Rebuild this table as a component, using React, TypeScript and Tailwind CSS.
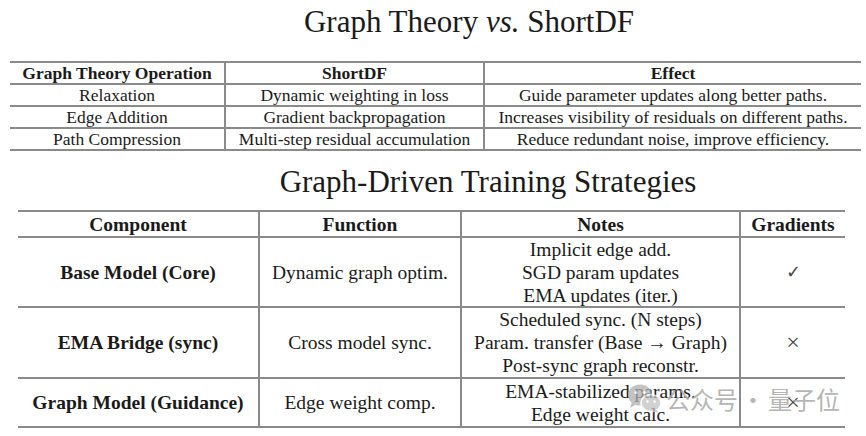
import React from 'react'

const serif = { fontFamily: '"Liberation Serif", "Times New Roman", serif' }

const opsRows = [
  ['Relaxation', 'Dynamic weighting in loss', 'Guide parameter updates along better paths.'],
  ['Edge Addition', 'Gradient backpropagation', 'Increases visibility of residuals on different paths.'],
  ['Path Compression', 'Multi-step residual accumulation', 'Reduce redundant noise, improve efficiency.'],
]

interface StrategyRow {
  component: string
  fn: string
  notes: string[]
  grad: string
  height: string
}

const strategyRows: StrategyRow[] = [
  {
    component: 'Base Model (Core)',
    fn: 'Dynamic graph optim.',
    notes: ['Implicit edge add.', 'SGD param updates', 'EMA updates (iter.)'],
    grad: '✓',
    height: 'h-[70px]',
  },
  {
    component: 'EMA Bridge (sync)',
    fn: 'Cross model sync.',
    notes: ['Scheduled sync. (N steps)', 'Param. transfer (Base → Graph)', 'Post-sync graph reconstr.'],
    grad: '×',
    height: 'h-[71px]',
  },
  {
    component: 'Graph Model (Guidance)',
    fn: 'Edge weight comp.',
    notes: ['EMA-stabilized params.', 'Edge weight calc.'],
    grad: '×',
    height: 'h-[49px]',
  },
]

// watermark logo (two chat bubbles)
function WeChatMark() {
  return (
    <svg width="36" height="32" viewBox="0 0 36 32" className="opacity-75">
      <ellipse cx="13" cy="12" rx="12" ry="10.5" fill="#b0b0b0" />
      <path d="M5 19 L3 25 L10 21 Z" fill="#b0b0b0" />
      <circle cx="9" cy="9.5" r="1.6" fill="#fff" />
      <circle cx="17" cy="9.5" r="1.6" fill="#fff" />
      <ellipse cx="24" cy="20" rx="10" ry="8.5" fill="#c2c2c2" stroke="#fff" strokeWidth="1.5" />
      <path d="M29 26 L32 30 L25 28 Z" fill="#c2c2c2" />
      <circle cx="20.5" cy="18.5" r="1.3" fill="#fff" />
      <circle cx="27.5" cy="18.5" r="1.3" fill="#fff" />
    </svg>
  )
}

export default function App() {
  return (
    <div className="relative w-[866px] h-[436px] overflow-hidden bg-white text-[#1a1a1a]" style={serif}>
      <div className="pt-[2px] pl-[72px] h-[42px] text-center text-[31px] leading-[40px]">
        Graph Theory <i>vs.</i> ShortDF
      </div>

      <div className="mt-[19px] ml-[10px] w-[851px] border-t-2 border-[#8a8a8a] text-[17.5px] leading-[20px]">
        <div className="grid grid-cols-[214px_259px_378px] h-[22px] border-b-2 border-[#8a8a8a] font-bold">
          <div className="flex items-center justify-center">Graph Theory Operation</div>
          <div className="flex items-center justify-center border-l-2 border-[#8a8a8a]">ShortDF</div>
          <div className="flex items-center justify-center border-l-2 border-[#8a8a8a]">Effect</div>
        </div>
        {opsRows.map((r) => (
          <div key={r[0]} className="grid grid-cols-[214px_259px_378px] h-[22px] border-b-2 border-[#8a8a8a]">
            <div className="flex items-center justify-center">{r[0]}</div>
            <div className="flex items-center justify-center border-l-2 border-[#8a8a8a]">{r[1]}</div>
            <div className="flex items-center justify-center border-l-2 border-[#8a8a8a]">{r[2]}</div>
          </div>
        ))}
      </div>

      <div className="mt-[11px] pl-[110px] h-[40px] text-center text-[31px] leading-[40px]">
        Graph-Driven Training Strategies
      </div>

      <div className="mt-[8px] ml-[18px] w-[827px] border-t-2 border-[#8a8a8a] text-[19.5px] leading-[23px]">
        <div className="grid grid-cols-[240px_202px_279px_106px] h-[26px] border-b-2 border-[#8a8a8a] font-bold">
          <div className="flex items-center justify-center">Component</div>
          <div className="flex items-center justify-center border-l-2 border-[#8a8a8a]">Function</div>
          <div className="flex items-center justify-center border-l-2 border-[#8a8a8a]">Notes</div>
          <div className="flex items-center justify-center border-l-2 border-[#8a8a8a]">Gradients</div>
        </div>
        {strategyRows.map((r) => (
          <div
            key={r.component}
            className={`grid grid-cols-[240px_202px_279px_106px] border-b-2 border-[#8a8a8a] ${r.height}`}
          >
            <div className="flex items-center justify-center font-bold">{r.component}</div>
            <div className="flex items-center justify-center border-l-2 border-[#8a8a8a]">{r.fn}</div>
            <div className="flex flex-col items-center justify-center border-l-2 border-[#8a8a8a]">
              {r.notes.map((n) => (
                <span key={n}>{n}</span>
              ))}
            </div>
            <div
              className={`flex items-center justify-center border-l-2 border-[#8a8a8a] text-[#444] ${
                r.grad === '✓' ? 'text-[18px]' : 'text-[24px]'
              }`}
            >
              {r.grad}
            </div>
          </div>
        ))}
      </div>

      <div
        className="absolute left-[627px] top-[383px] flex items-center text-[24px] leading-[32px] text-[#ababab]/90"
        style={{ fontFamily: '"Noto Sans CJK SC", "Noto Sans", sans-serif' }}
      >
        <WeChatMark />
        <span className="ml-[3px]">公众号</span>
        <span className="mx-[3px]">·</span>
        <span>量子位</span>
      </div>
    </div>
  )
}
